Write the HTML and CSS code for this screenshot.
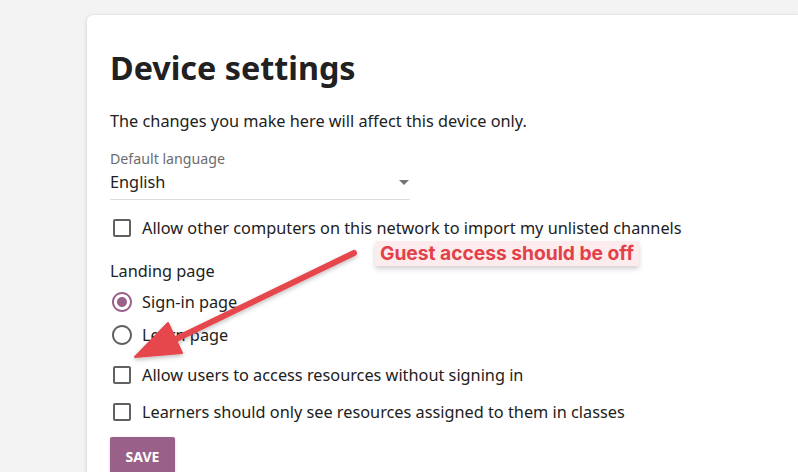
FILE: index.html
```html
<!DOCTYPE html>
<html>
<head>
<meta charset="utf-8">
<link rel="stylesheet" href="styles.css">
</head>
<body>
<div class="page">
  <div class="card">
    <h1 class="title">Device settings</h1>
    <p class="intro">The changes you make here will affect this device only.</p>
    <div class="select">
      <div class="select-label">Default language</div>
      <div class="select-value">
        <span>English</span>
        <svg class="caret" width="24" height="24" viewBox="0 0 24 24"><path d="M7 10l5 5 5-5z" fill="#757575"/></svg>
      </div>
    </div>
    <label class="option opt-network">
      <svg class="icon" width="24" height="24" viewBox="0 0 24 24"><path fill="#616161" d="M19 5v14H5V5h14m0-2H5c-1.1 0-2 .9-2 2v14c0 1.1.9 2 2 2h14c1.1 0 2-.9 2-2V5c0-1.1-.9-2-2-2z"/></svg>
      <span>Allow other computers on this network to import my unlisted channels</span>
    </label>
    <div class="group-label">Landing page</div>
    <label class="option opt-radio">
      <svg class="icon" width="24" height="24" viewBox="0 0 24 24"><path fill="#996189" d="M12 7c-2.76 0-5 2.24-5 5s2.24 5 5 5 5-2.24 5-5-2.24-5-5-5zm0-5C6.48 2 2 6.48 2 12s4.48 10 10 10 10-4.48 10-10S17.52 2 12 2zm0 18c-4.42 0-8-3.58-8-8s3.58-8 8-8 8 3.58 8 8-3.58 8-8 8z"/></svg>
      <span>Sign-in page</span>
    </label>
    <label class="option opt-radio">
      <svg class="icon" width="24" height="24" viewBox="0 0 24 24"><path fill="#616161" d="M12 2C6.48 2 2 6.48 2 12s4.48 10 10 10 10-4.48 10-10S17.52 2 12 2zm0 18c-4.42 0-8-3.58-8-8s3.58-8 8-8 8 3.58 8 8-3.58 8-8 8z"/></svg>
      <span>Learn page</span>
    </label>
    <label class="option opt-guest">
      <svg class="icon" width="24" height="24" viewBox="0 0 24 24"><path fill="#616161" d="M19 5v14H5V5h14m0-2H5c-1.1 0-2 .9-2 2v14c0 1.1.9 2 2 2h14c1.1 0 2-.9 2-2V5c0-1.1-.9-2-2-2z"/></svg>
      <span>Allow users to access resources without signing in</span>
    </label>
    <label class="option opt-learners">
      <svg class="icon" width="24" height="24" viewBox="0 0 24 24"><path fill="#616161" d="M19 5v14H5V5h14m0-2H5c-1.1 0-2 .9-2 2v14c0 1.1.9 2 2 2h14c1.1 0 2-.9 2-2V5c0-1.1-.9-2-2-2z"/></svg>
      <span>Learners should only see resources assigned to them in classes</span>
    </label>
    <button class="save">SAVE</button>
  </div>
  <svg class="arrow" width="798" height="472" viewBox="0 0 798 472">
    <defs>
      <filter id="sh" x="-20%" y="-20%" width="140%" height="140%">
        <feDropShadow dx="0" dy="2" stdDeviation="2" flood-color="#000" flood-opacity="0.25"/>
      </filter>
    </defs>
    <g filter="url(#sh)" fill="#e5464d" stroke="#e5464d">
      <line x1="354" y1="253" x2="170" y2="342" stroke-width="6" stroke-linecap="round"/>
      <polygon points="135,357 168,323 182,353" stroke-width="2" stroke-linejoin="round"/>
    </g>
  </svg>
  <div class="note">Guest access should be off</div>
</div>
</body>
</html>
```

FILE: styles.css
```css
* { box-sizing: border-box; }
html, body { margin: 0; padding: 0; }
body {
  background: #f3f3f3;
  font-family: "Noto Sans", "Open Sans", sans-serif;
  color: #212121;
  overflow: hidden;
}
.page {
  position: relative;
  width: 798px;
  height: 472px;
  padding: 15px 0 0 87px;
}
.card {
  background: #fff;
  border-radius: 6px 0 0 0;
  box-shadow: 0 1px 4px rgba(0,0,0,0.12), 0 0 2px rgba(0,0,0,0.08);
  height: 480px;
  padding: 30px 0 0 23px;
}
.title {
  margin: 0;
  font-size: 32.3px;
  font-weight: 700;
  line-height: 44px;
  color: #212121;
}
.intro {
  margin: 20px 0 0;
  font-size: 16.3px;
  line-height: 24px;
}
.select {
  width: 300px;
  margin-top: 16px;
  border-bottom: 1px solid #dcdcdc;
  padding-bottom: 4px;
}
.select-label {
  font-size: 14.2px;
  line-height: 20px;
  color: #6c6c6c;
}
.select-value {
  display: flex;
  align-items: center;
  justify-content: space-between;
  font-size: 16.3px;
  line-height: 26px;
}
.caret { margin-right: -6px; }
.option {
  display: flex;
  align-items: center;
  gap: 8px;
  font-size: 16.3px;
  line-height: 24px;
}
.icon { flex: none; display: block; }
.opt-network { margin-top: 16px; }
.group-label {
  margin-top: 19px;
  font-size: 16.3px;
  line-height: 24px;
}
.opt-radio { margin-top: 7px; }
.opt-radio + .opt-radio { margin-top: 9px; }
.opt-guest { margin-top: 16px; }
.opt-learners { margin-top: 13px; }
.save {
  margin-top: 13px;
  display: block;
  width: 65px;
  height: 38px;
  border: none;
  border-radius: 2px;
  background: #996189;
  color: #fff;
  font-family: "Noto Sans", sans-serif;
  font-weight: 700;
  font-size: 14px;
  padding: 0;
  box-shadow: 0 1px 3px rgba(0,0,0,0.2);
}
.arrow {
  position: absolute;
  left: 0;
  top: 0;
  pointer-events: none;
}
.note {
  position: absolute;
  left: 375px;
  top: 241px;
  padding: 0 5px;
  height: 25px;
  line-height: 25px;
  background: #fdeced;
  color: #e2414a;
  font-family: Inter, "Liberation Sans", sans-serif;
  font-weight: 700;
  font-size: 19.3px;
  letter-spacing: -0.05px;
  border-radius: 2px;
  box-shadow: 0 3px 5px rgba(0,0,0,0.18);
}
```
